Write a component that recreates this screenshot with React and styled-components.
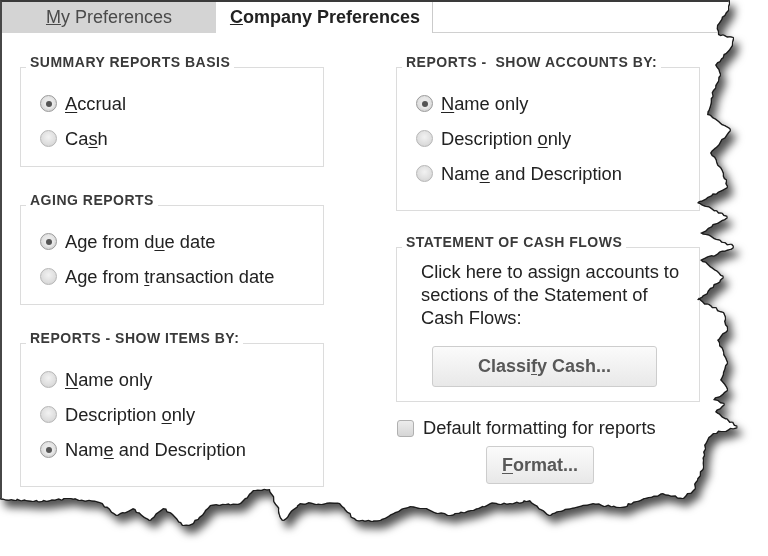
import styled, { createGlobalStyle } from "styled-components";

const GlobalStyle = createGlobalStyle`
  html, body {
    margin: 0;
    padding: 0;
    background: #fff;
  }
  body {
    font-family: "Liberation Sans", Arial, sans-serif;
  }
`;

// outline of the torn screenshot (page coords)
const EDGE = [
  [0, 0], [728, 0], [728, 10], [717, 25], [718, 35], [733, 38], [730, 48],
  [715, 65], [720, 75], [713, 90], [707, 115], [730, 130], [710, 153],
  [720, 168], [727, 187], [697, 203], [727, 217], [700, 233], [733, 247],
  [700, 260], [723, 277], [697, 300], [723, 313], [727, 330], [717, 340],
  [727, 363], [720, 380], [727, 390], [713, 400], [724, 404], [715, 412],
  [737, 427], [713, 433], [707, 440], [703, 452], [703, 467], [697, 480],
  [693, 490], [683, 498], [663, 493], [640, 500], [620, 507], [593, 503],
  [563, 510], [550, 515], [530, 500], [510, 503], [490, 503], [473, 510],
  [450, 515], [423, 508], [410, 506], [395, 512], [380, 520], [357, 520],
  [340, 503], [300, 503], [283, 520], [270, 489], [253, 490], [240, 503],
  [210, 505], [193, 523], [183, 525], [173, 514], [163, 508], [150, 520],
  [133, 508], [117, 515], [100, 502], [67, 498], [50, 500], [33, 501], [0, 498],
];

const roughen = (pts) => {
  let seed = 11;
  const rnd = () => {
    seed = (seed * 16807) % 2147483647;
    return seed / 2147483647 - 0.5;
  };
  const out = [];
  for (let i = 0; i < pts.length - 1; i++) {
    const [x1, y1] = pts[i];
    const [x2, y2] = pts[i + 1];
    const n = Math.max(1, Math.round(Math.hypot(x2 - x1, y2 - y1) / 3));
    for (let k = 0; k < n; k++) {
      const t = k / n;
      const j = i === 0 || k === 0 ? 0 : 1;
      out.push([x1 + (x2 - x1) * t + rnd() * 2.2 * j, y1 + (y2 - y1) * t + rnd() * 2.2 * j]);
    }
  }
  out.push(pts[pts.length - 1]);
  return out.map(([x, y]) => `${x.toFixed(1)}px ${y.toFixed(1)}px`).join(", ");
};

const TORN = roughen(EDGE);

const Stage = styled.div`
  width: 768px;
  height: 556px;
  filter: drop-shadow(1px 0 0 #1c1c1c) drop-shadow(0 1px 0 #1c1c1c)
    drop-shadow(-1px 0 0 #1c1c1c) drop-shadow(0 -1px 0 #1c1c1c)
    drop-shadow(5px 7px 4px rgba(0, 0, 0, 0.68));
`;

const Paper = styled.div`
  width: 768px;
  height: 556px;
  box-sizing: border-box;
  background: #fff;
  border-top: 2px solid #3a3a3a;
  border-left: 2px solid #474747;
  clip-path: polygon(${TORN});
  display: flex;
  flex-direction: column;
`;

const TabBar = styled.div`
  display: flex;
  height: 31px;
`;

const Tab = styled.div`
  width: 214px;
  margin-left: ${(p) => (p.$active ? "2px" : "0")};
  background: ${(p) => (p.$active ? "#fff" : "#d4d4d4")};
  border-right: ${(p) => (p.$active ? "1px solid #cbcbcb" : "none")};
  color: ${(p) => (p.$active ? "#222" : "#4a4a4a")};
  font-weight: ${(p) => (p.$active ? 700 : 400)};
  font-size: 18px;
  line-height: 30px;
  text-align: center;
`;

const TabFill = styled.div`
  flex: 1;
  border-bottom: 1px solid #d0d0d0;
`;

const Body = styled.div`
  display: flex;
  gap: 72px;
  padding: 21px 0 0 18px;
`;

const Column = styled.div`
  width: 304px;
  display: flex;
  flex-direction: column;
  gap: ${(p) => p.$gap || "25px"};
`;

const Group = styled.section`
  display: flex;
  flex-direction: column;
`;

const Caption = styled.h3`
  align-self: flex-start;
  position: relative;
  z-index: 1;
  margin: 0 0 -3px 6px;
  padding: 0 4px;
  background: #fff;
  color: #3a3a3a;
  font-size: 14px;
  font-weight: 700;
  line-height: 16px;
  letter-spacing: 0.5px;
  white-space: pre;
`;

const Box = styled.div`
  border: 1px solid #dcdcdc;
  padding: ${(p) => p.$pad || "18px 0 10px 19px"};
  display: flex;
  flex-direction: column;
`;

const Row = styled.label`
  height: 35px;
  display: flex;
  align-items: center;
  gap: 8px;
  color: #222;
  font-size: 18.3px;

  u {
    text-decoration-thickness: 1px;
    text-underline-offset: 2px;
  }
`;

const CheckRow = styled(Row)`
  height: 24px;
  gap: 9px;
  margin-top: -9px;
`;

const RadioDot = styled.span`
  flex: none;
  width: 17px;
  height: 17px;
  box-sizing: border-box;
  border-radius: 50%;
  border: 1px solid ${(p) => (p.$checked ? "#9a9a9a" : "#b6b6b6")};
  background: radial-gradient(circle at 50% 40%, #f2f2f2 0%, #dedede 60%, #cbcbcb 100%);
  display: flex;
  align-items: center;
  justify-content: center;

  &::after {
    content: "";
    display: ${(p) => (p.$checked ? "block" : "none")};
    width: 6px;
    height: 6px;
    border-radius: 50%;
    background: #555;
    box-shadow: 0 0 0 2px #e9e9e9;
  }
`;

const CheckBox = styled.span`
  flex: none;
  width: 17px;
  height: 17px;
  margin-left: 1px;
  box-sizing: border-box;
  border-radius: 3px;
  border: 1px solid #b0b0b0;
  background: linear-gradient(#ececec, #d6d6d6);
`;

const Note = styled.p`
  margin: 0;
  padding-left: 24px;
  color: #222;
  font-size: 18.3px;
  line-height: 23px;
`;

const Button = styled.button`
  box-sizing: border-box;
  width: ${(p) => p.$w};
  height: ${(p) => p.$h};
  margin: ${(p) => p.$m};
  border: 1px solid #cdcdcd;
  border-radius: 3px;
  background: linear-gradient(#fbfbfb, #e8e8e8);
  color: #585858;
  font-family: inherit;
  font-size: 18px;
  font-weight: 700;
  padding: 0;

  u {
    text-decoration-thickness: 1px;
    text-underline-offset: 2px;
  }
`;

const Radio = ({ checked, children }) => (
  <Row>
    <RadioDot $checked={checked} />
    <span>{children}</span>
  </Row>
);

export default function App() {
  return (
    <>
      <GlobalStyle />
      <Stage>
        <Paper>
          <TabBar>
            <Tab>
              <u>M</u>y Preferences
            </Tab>
            <Tab $active>
              <u>C</u>ompany Preferences
            </Tab>
            <TabFill />
          </TabBar>
          <Body>
            <Column>
              <Group>
                <Caption>SUMMARY REPORTS BASIS</Caption>
                <Box>
                  <Radio checked>
                    <u>A</u>ccrual
                  </Radio>
                  <Radio>
                    Ca<u>s</u>h
                  </Radio>
                </Box>
              </Group>
              <Group>
                <Caption>AGING REPORTS</Caption>
                <Box>
                  <Radio checked>
                    Age from d<u>u</u>e date
                  </Radio>
                  <Radio>
                    Age from <u>t</u>ransaction date
                  </Radio>
                </Box>
              </Group>
              <Group>
                <Caption>REPORTS - SHOW ITEMS BY:</Caption>
                <Box $pad="18px 0 19px 19px">
                  <Radio>
                    <u>N</u>ame only
                  </Radio>
                  <Radio>
                    Description <u>o</u>nly
                  </Radio>
                  <Radio checked>
                    Nam<u>e</u> and Description
                  </Radio>
                </Box>
              </Group>
            </Column>
            <Column $gap="23px">
              <Group>
                <Caption>{"REPORTS -  SHOW ACCOUNTS BY:"}</Caption>
                <Box $pad="18px 0 19px 19px">
                  <Radio checked>
                    <u>N</u>ame only
                  </Radio>
                  <Radio>
                    Description <u>o</u>nly
                  </Radio>
                  <Radio>
                    Nam<u>e</u> and Description
                  </Radio>
                </Box>
              </Group>
              <Group>
                <Caption>STATEMENT OF CASH FLOWS</Caption>
                <Box $pad="12px 0 14px 0">
                  <Note>
                    Click here to assign accounts to
                    <br />
                    sections of the Statement of
                    <br />
                    Cash Flows:
                  </Note>
                  <Button $w="225px" $h="41px" $m="17px 0 0 35px">
                    Classi<u>f</u>y Cash...
                  </Button>
                </Box>
              </Group>
              <div>
                <CheckRow>
                  <CheckBox />
                  <span>Default formatting for reports</span>
                </CheckRow>
                <Button $w="108px" $h="38px" $m="6px 0 0 90px">
                  <u>F</u>ormat...
                </Button>
              </div>
            </Column>
          </Body>
        </Paper>
      </Stage>
    </>
  );
}
